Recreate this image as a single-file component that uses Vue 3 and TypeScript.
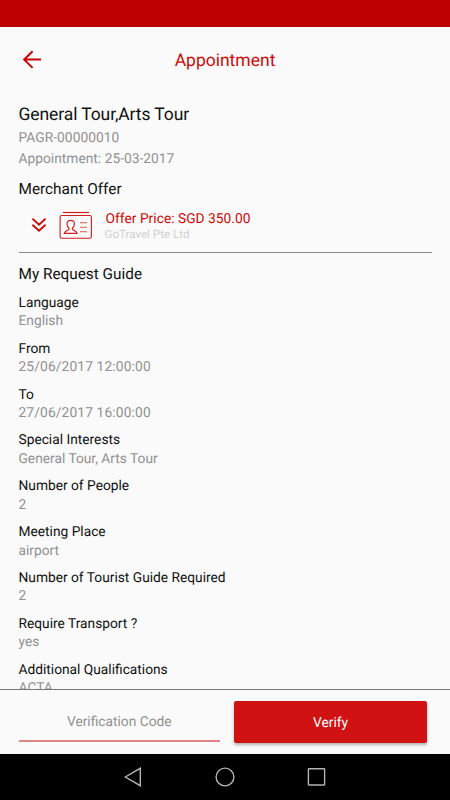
<script setup lang="ts">
interface Field {
  label: string
  value: string
}

const fields: Field[] = [
  { label: 'Language', value: 'English' },
  { label: 'From', value: '25/06/2017 12:00:00' },
  { label: 'To', value: '27/06/2017 16:00:00' },
  { label: 'Special Interests', value: 'General Tour, Arts Tour' },
  { label: 'Number of People', value: '2' },
  { label: 'Meeting Place', value: 'airport' },
  { label: 'Number of Tourist Guide Required', value: '2' },
  { label: 'Require Transport ?', value: 'yes' },
  { label: 'Additional Qualifications', value: 'ACTA' },
]

const isNumeric = (value: string): boolean => /^\d/.test(value)
</script>

<template>
  <div class="screen">
    <div class="status-bar"></div>
    <header class="toolbar">
      <button class="back" aria-label="Back">
        <svg width="20" height="20" viewBox="0 0 20 20" fill="none" stroke="#cc0000" stroke-width="2">
          <path d="M19 9.6H2.5M10.6 1.3L2.2 9.6l8.4 8.3" />
        </svg>
      </button>
      <h1>Appointment</h1>
    </header>

    <main class="content">
      <section class="summary">
        <h2>General Tour,Arts Tour</h2>
        <p>PAGR-00000010</p>
        <p class="date">Appointment: 25-03-2017</p>
      </section>

      <h3 class="offer-heading">Merchant Offer</h3>
      <section class="offer">
        <svg class="chevrons" width="16" height="16" viewBox="0 0 16 16" fill="none" stroke="#cc0a0a" stroke-width="1.9">
          <path d="M1.4 1.6L8 7.7l6.6-6.1M1.4 7.7L8 13.8l6.6-6.1" />
        </svg>
        <svg class="card" width="34" height="28" viewBox="0 0 34 28" fill="none" stroke="#d01c1c">
          <path d="M4 1.5h26" stroke-width="1.2" />
          <rect x="1.1" y="4.5" width="31.3" height="22.8" rx="1.8" stroke-width="1.1" />
          <path d="M11.7 9.3c-2.5 0-3.9 1.6-3.7 4 .1 1.8.9 3.1 2 4v1.2c0 .7-4.6 1.1-4.7 3.9h12.8c-.1-2.8-4.7-3.2-4.7-3.9v-1.2c1.1-.9 1.9-2.2 2-4 .2-2.4-1.2-4-3.7-4z" stroke-width="1.15" />
          <path d="M21 11.8h7M21 16.3h7M21 20.7h7" stroke-width="1.1" stroke="#dc5555" />
        </svg>
        <div class="offer-text">
          <strong>Offer Price: SGD 350.00</strong>
          <span>GoTravel Pte Ltd</span>
        </div>
      </section>

      <h3 class="request-heading">My Request Guide</h3>
      <dl>
        <div v-for="field in fields" :key="field.label" class="field">
          <dt>{{ field.label }}</dt>
          <dd :class="{ numeric: isNumeric(field.value) }">{{ field.value }}</dd>
        </div>
      </dl>
    </main>

    <footer class="verify-bar">
      <div class="code-field">
        <input type="text" placeholder="Verification Code" />
      </div>
      <button class="verify">Verify</button>
    </footer>

    <nav class="nav-bar">
      <svg width="20" height="20" viewBox="0 0 20 20"><path d="M2.3 10L17.3 1.3v17.4z" /></svg>
      <svg width="20" height="20" viewBox="0 0 20 20"><circle cx="10" cy="10" r="8.9" /></svg>
      <svg width="20" height="20" viewBox="0 0 20 20"><rect x="1.4" y="1.8" width="16.2" height="16.2" rx=".5" /></svg>
    </nav>
  </div>
</template>

<style>
body {
  margin: 0;
  background: #fafafa;
}
</style>

<style scoped>
.screen {
  display: flex;
  flex-direction: column;
  width: 450px;
  height: 800px;
  overflow: hidden;
  background: #fafafa;
  color: #111;
  font-family: Roboto, sans-serif;
  text-rendering: geometricPrecision;
}

h1, h2, h3, p, dl, dd {
  margin: 0;
  font-weight: 400;
}

button, input {
  border: 0;
  padding: 0;
  font-family: inherit;
  text-rendering: inherit;
}

.status-bar {
  flex: none;
  height: 27px;
  background: #be0000;
}

.toolbar {
  flex: none;
  display: grid;
  grid-template-columns: 64px 1fr 64px;
  align-items: center;
  height: 66px;
}

.back {
  justify-self: start;
  width: 20px;
  height: 20px;
  margin-left: 22px;
  background: none;
}

.back svg {
  display: block;
}

h1 {
  padding-top: 2px;
  color: #cc0a0a;
  font-size: 17.5px;
  line-height: 22px;
  text-align: center;
}

.content {
  flex: 1;
  min-height: 0;
  overflow: hidden;
  padding: 11px 18px 0 18.5px;
}

h2 {
  margin-bottom: 2px;
  font-size: 17.5px;
  line-height: 22px;
  letter-spacing: -0.1px;
}

.summary {
  height: 75px;
}

.summary p {
  color: #919191;
  font-size: 13.75px;
  line-height: 21px;
  letter-spacing: 0.06px;
}

.summary .date {
  letter-spacing: 0.02px;
}

h3 {
  font-size: 15.35px;
  line-height: 20px;
}

.offer {
  display: flex;
  box-sizing: border-box;
  height: 54px;
  padding: 11px 0 0 12.5px;
  border-bottom: 1px solid #888;
}

.chevrons {
  margin-top: 7px;
}

.card {
  margin: 1px 13px 0 11.5px;
}

.offer-text {
  display: flex;
  flex-direction: column;
  padding-top: 1px;
}

.offer-text strong {
  color: #cc0a0a;
  font-size: 13.75px;
  font-weight: 400;
  line-height: 17px;
  letter-spacing: 0.03px;
}

.offer-text span {
  margin-left: -1px;
  color: #d0d0d0;
  font-size: 11.6px;
  line-height: 13px;
}

.request-heading {
  padding-top: 10.6px;
}

dl {
  padding-top: 10.4px;
}

.field {
  height: 45.83px;
  font-size: 13.75px;
  line-height: 18.4px;
}

.field dd {
  color: #919191;
}

.field .numeric {
  letter-spacing: 0.14px;
}

.verify-bar {
  flex: none;
  display: flex;
  box-sizing: border-box;
  height: 65px;
  padding: 11px 23px 0 18.5px;
  gap: 14px;
  border-top: 1px solid #777;
}

.code-field {
  box-sizing: border-box;
  width: 201.5px;
  height: 41px;
  border-bottom: 2px solid #e28484;
}

input {
  display: block;
  box-sizing: border-box;
  width: 100%;
  height: 39px;
  padding-top: 3px;
  background: none;
  font-size: 13.75px;
  text-align: center;
  outline: none;
}

input::placeholder {
  color: #919191;
  opacity: 1;
}

.verify {
  width: 193px;
  height: 42px;
  padding-top: 2px;
  border-radius: 2px;
  background: #d01212;
  box-shadow: 0 2px 3px rgba(0, 0, 0, 0.3);
  color: #fff;
  font-size: 13.75px;
}

.nav-bar {
  flex: none;
  display: flex;
  justify-content: center;
  align-items: center;
  gap: 72px;
  height: 46px;
  background: #000;
}

.nav-bar svg {
  fill: none;
  stroke: #b4b4b4;
  stroke-width: 1.4;
}
</style>
